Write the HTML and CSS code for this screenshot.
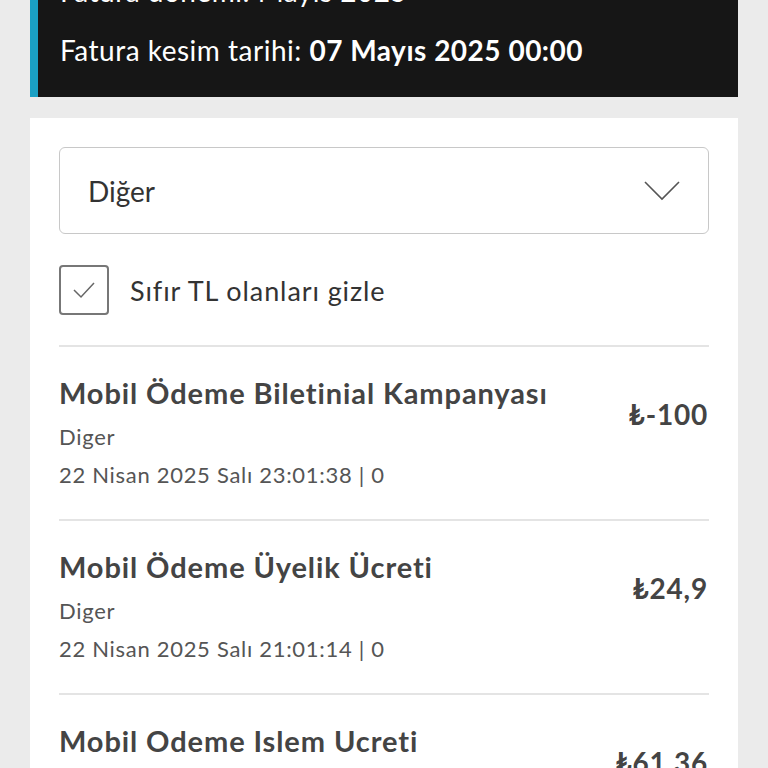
FILE: index.html
```html
<!DOCTYPE html>
<html lang="tr">
<head>
    <meta charset="UTF-8">
    <meta name="viewport" content="width=device-width, initial-scale=1.0">
    <title>Fatura Detayı</title>
    <link rel="stylesheet" href="styles.css">
</head>
<body>
    <div class="page">
        <!-- Fatura bilgisi -->
        <div class="bill-info">
            <p class="bill-line bill-period">Fatura dönemi: Mayıs 2025</p>
            <p class="bill-line">Fatura kesim tarihi: <strong>07 Mayıs 2025 00:00</strong></p>
        </div>

        <div class="card">
            <div class="select">
                <span>Diğer</span>
                <svg class="chevron" width="36" height="20" viewBox="0 0 36 20">
                    <path d="M1 1 L18 18 L35 1" fill="none" stroke="#555" stroke-width="1.6"/>
                </svg>
            </div>

            <label class="check">
                <span class="box">
                    <svg width="26" height="22" viewBox="0 0 26 22">
                        <path d="M3 11 L10 18 L23 4" fill="none" stroke="#666" stroke-width="1.5"/>
                    </svg>
                </span>
                Sıfır TL olanları gizle
            </label>

            <!-- Hareketler -->
            <div class="row">
                <div class="row-text">
                    <div class="title">Mobil Ödeme Biletinial Kampanyası</div>
                    <div class="sub">Diger</div>
                    <div class="sub">22 Nisan 2025 Salı 23:01:38 | 0</div>
                </div>
                <div class="amount">₺-100</div>
            </div>
            <div class="row">
                <div class="row-text">
                    <div class="title">Mobil Ödeme Üyelik Ücreti</div>
                    <div class="sub">Diger</div>
                    <div class="sub">22 Nisan 2025 Salı 21:01:14 | 0</div>
                </div>
                <div class="amount">₺24,9</div>
            </div>
            <div class="row">
                <div class="row-text">
                    <div class="title">Mobil Odeme Islem Ucreti</div>
                    <div class="sub">Diger</div>
                    <div class="sub">22 Nisan 2025 Salı 19:01:02 | 0</div>
                </div>
                <div class="amount">₺61,36</div>
            </div>
        </div>
    </div>
</body>
</html>
```

FILE: styles.css
```css
body {
    margin: 0;
    background-color: #ebebeb;
    font-family: "Lato", sans-serif;
    color: #333;
    overflow: hidden;
}
.page {
    padding: 0 30px;
}
.bill-info {
    background-color: #161616;
    border-left: 8px solid #1aa0c4;
    margin-top: -24px;
    padding: 0 22px 32px;
    color: #fff;
}
.bill-line {
    margin: 0;
    font-size: 28px;
    line-height: 30px;
    letter-spacing: 0.5px;
}
.bill-period {
    padding-bottom: 29px;
}
.bill-line strong {
    font-weight: bold;
}
.card {
    background-color: #fff;
    margin-top: 21px;
    padding: 29px 29px 0;
}
.select {
    display: flex;
    align-items: center;
    justify-content: space-between;
    height: 85px;
    border: 1px solid #c8c8c8;
    border-radius: 6px;
    padding: 0 28px 0 28px;
    font-size: 28px;
    color: #333;
}
.check {
    display: flex;
    align-items: center;
    gap: 21px;
    margin-top: 31px;
    font-size: 27px;
    letter-spacing: 0.9px;
    color: #333;
}
.box {
    width: 46px;
    height: 46px;
    border: 2px solid #777;
    border-radius: 4px;
    display: flex;
    align-items: center;
    justify-content: center;
}
.row {
    display: flex;
    justify-content: space-between;
    align-items: flex-start;
    border-top: 2px solid #e4e4e4;
    height: 174px;
    margin-top: 30px;
    padding-top: 29px;
    box-sizing: border-box;
}
.row + .row {
    margin-top: 0;
}
.title {
    font-size: 29px;
    line-height: 34px;
    font-weight: bold;
    letter-spacing: 0.9px;
    color: #444;
    margin-bottom: 8px;
}
.sub {
    font-size: 22px;
    color: #555;
    line-height: 38px;
    letter-spacing: 0.7px;
}
.amount {
    font-size: 28px;
    font-weight: bold;
    letter-spacing: 0.8px;
    color: #444;
    margin-top: 21px;
    margin-right: 1px;
}
```
